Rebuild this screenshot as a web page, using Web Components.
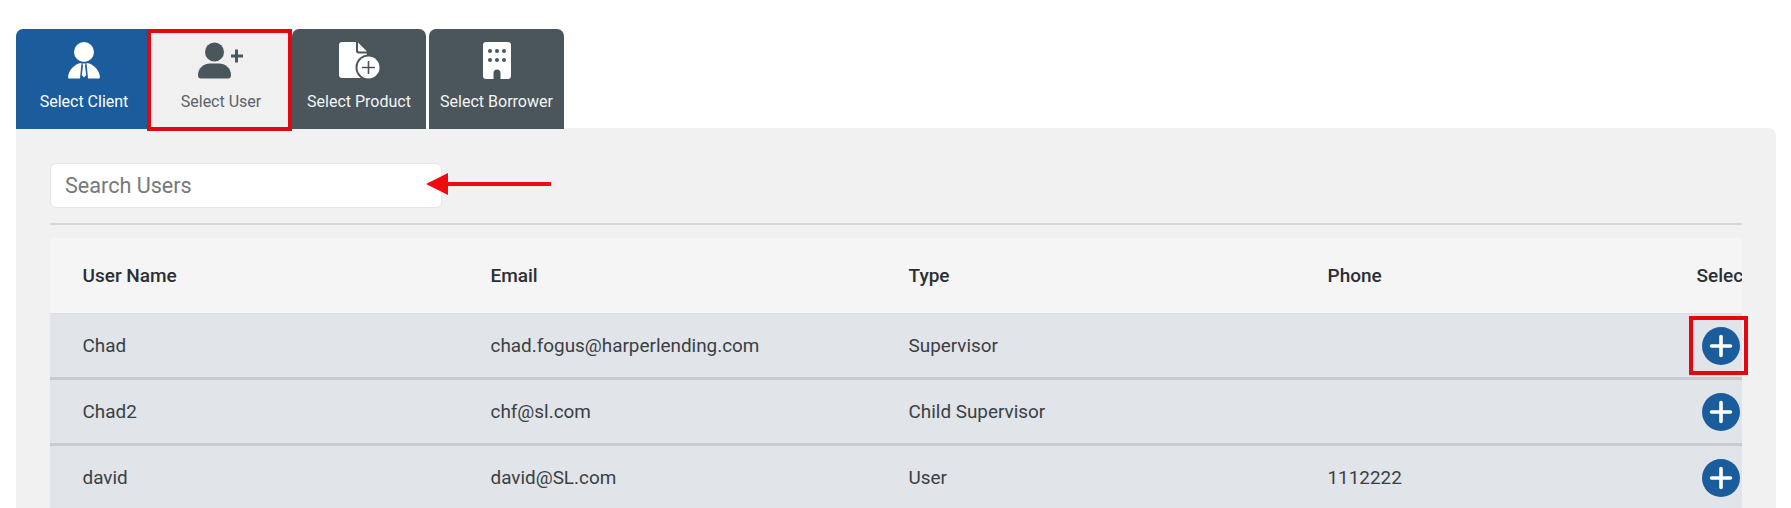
<!DOCTYPE html>
<html>
<head>
<meta charset="utf-8">
<style>
  html, body { margin: 0; height: 508px; overflow: hidden; background: #fff; }
  body { font-family: Roboto, "Liberation Sans", sans-serif; }
</style>
</head>
<body>
<select-page>
  <tab-bar>
    <tab-item active-blue width="131">
      <svg slot="icon" width="32" height="37" viewBox="0 0 32 37" fill="#fff">
        <circle cx="16" cy="10" r="10"/>
        <path d="M10.500 21.500 L13.500 21 L12 36.500 L1 36.500 C0 36.500 0 35 .3 33.500 C1.200 28 5 24 10.500 21.500Z"/>
        <path d="M21.500 21.500 L18.500 21 L20 36.500 L31 36.500 C32 36.500 32 35 31.700 33.500 C30.800 28 27 24 21.500 21.500Z"/>
        <path d="M14.400 21.500 H17.600 L17 24 L18.200 33 L16 35.500 L13.800 33 L15 24Z"/>
      </svg>
      Select Client
    </tab-item>
    <tab-item current width="145">
      <svg slot="icon" width="46" height="37" viewBox="0 0 46 37" fill="#4b555c">
        <circle cx="16.500" cy="10" r="9.500"/>
        <path d="M0 33 C0 26 6 21.500 12 21.500 H21 C27 21.500 33 26 33 33 C33 35.500 32 36.500 30 36.500 H3 C1 36.500 0 35.500 0 33Z"/>
        <path d="M33 12.500 H37 V7.500 H40 V12.500 H45 V15.500 H40 V20.500 H37 V15.500 H33Z"/>
      </svg>
      Select User
    </tab-item>
    <tab-item width="134">
      <svg slot="icon" width="41" height="37" viewBox="0 0 41 37">
        <path fill="#fff" d="M3 0 H17 V9 C17 10.500 18 11.500 19.500 11.500 H28 V36 H3 C1.300 36 0 34.700 0 33 V3 C0 1.300 1.300 0 3 0Z"/>
        <path fill="#fff" d="M19 0.500 L28 9.500 H20.500 C19.500 9.500 19 9 19 8Z"/>
        <circle cx="29.500" cy="25.500" r="13" fill="#4b555c"/>
        <circle cx="29.500" cy="25.500" r="11" fill="#fff"/>
        <path fill="#4b555c" d="M28.700 19 H30.300 V24.700 H36 V26.300 H30.300 V32 H28.700 V26.300 H23 V24.700 H28.700Z"/>
      </svg>
      Select Product
    </tab-item>
    <tab-item width="135" class="last">
      <svg slot="icon" width="28" height="37" viewBox="0 0 28 37">
        <path fill="#fff" d="M3 0 H25 C26.700 0 28 1.300 28 3 V34 C28 35.700 26.700 37 25 37 H17.500 V31 C17.500 29 16 27.500 14 27.500 C12 27.500 10.500 29 10.500 31 V37 H3 C1.300 37 0 35.700 0 34 V3 C0 1.300 1.300 0 3 0Z"/>
        <g fill="#4b555c">
          <circle cx="7" cy="9" r="2"/><circle cx="14" cy="9" r="2"/><circle cx="21" cy="9" r="2"/>
          <circle cx="7" cy="18" r="2"/><circle cx="14" cy="18" r="2"/><circle cx="21" cy="18" r="2"/>
        </g>
      </svg>
      Select Borrower
    </tab-item>
  </tab-bar>
  <content-panel>
    <search-box placeholder="Search Users"></search-box>
    <user-table>
      <user-row header>
        <span slot="name">User Name</span><span slot="email">Email</span><span slot="type">Type</span><span slot="phone">Phone</span><span slot="select">Select</span>
      </user-row>
      <user-row>
        <span slot="name">Chad</span><span slot="email">chad.fogus@harperlending.com</span><span slot="type">Supervisor</span><add-button slot="select"></add-button>
      </user-row>
      <user-row>
        <span slot="name">Chad2</span><span slot="email">chf@sl.com</span><span slot="type">Child Supervisor</span><add-button slot="select"></add-button>
      </user-row>
      <user-row>
        <span slot="name">david</span><span slot="email">david@SL.com</span><span slot="type">User</span><span slot="phone">1112222</span><add-button slot="select"></add-button>
      </user-row>
    </user-table>
  </content-panel>
  <call-outs></call-outs>
</select-page>

<script>
class SelectPage extends HTMLElement {
  constructor() {
    super();
    this.attachShadow({ mode: "open" });
    this.shadowRoot.innerHTML = `
      <style>
        :host {
          display: block;
          position: relative;
          height: 508px;
          padding: 29px 15px 0 16px;
          box-sizing: border-box;
          overflow: hidden;
        }
      </style>
      <slot></slot>
    `;
  }
}

class TabBar extends HTMLElement {
  constructor() {
    super();
    this.attachShadow({ mode: "open" });
    this.shadowRoot.innerHTML = `
      <style>
        :host {
          display: flex;
          position: relative;
          z-index: 1;
          height: 100px;
          margin-bottom: -1px;
        }
      </style>
      <slot></slot>
    `;
  }
}

class TabItem extends HTMLElement {
  constructor() {
    super();
    this.attachShadow({ mode: "open" });
    this.shadowRoot.innerHTML = `
      <style>
        :host {
          display: flex;
          flex-direction: column;
          align-items: center;
          box-sizing: border-box;
          height: 100px;
          background: #4b555c;
          color: #f4f5f5;
          font-size: 16px;
          white-space: nowrap;
          border-radius: 7px 7px 0 0;
        }
        :host([active-blue]) { background: #1b5c9c; color: #fff; border-radius: 7px 0 0 0; padding-left: 5px; }
        :host([current]) { background: #f0f0f0; color: #5b6268; border-radius: 0; padding-left: 3px; }
        :host(.last) { margin-left: 3px; }
        .icon {
          display: flex;
          align-items: flex-end;
          justify-content: center;
          height: 50px;
          margin-bottom: 13px;
        }
        ::slotted(svg) { display: block; }
      </style>
      <div class="icon"><slot name="icon"></slot></div>
      <slot></slot>
    `;
  }
  connectedCallback() {
    this.style.width = this.getAttribute("width") + "px";
  }
}

class ContentPanel extends HTMLElement {
  constructor() {
    super();
    this.attachShadow({ mode: "open" });
    this.shadowRoot.innerHTML = `
      <style>
        :host {
          display: block;
          height: 400px;
          box-sizing: border-box;
          padding: 35px 34px 0;
          background: #f1f1f1;
          border-radius: 0 8px 0 0;
        }
      </style>
      <slot></slot>
    `;
  }
}

class SearchBox extends HTMLElement {
  constructor() {
    super();
    this.attachShadow({ mode: "open" });
    this.shadowRoot.innerHTML = `
      <style>
        :host {
          display: block;
          padding-bottom: 15px;
          border-bottom: 2px solid #d4d5d6;
          margin-bottom: 13px;
        }
        input {
          display: block;
          box-sizing: border-box;
          width: 392px;
          height: 45px;
          padding: 0 14px;
          border: 1px solid #e5e6e8;
          border-radius: 6px;
          background: #fff;
          font: 21.600px Roboto, "Liberation Sans", sans-serif;
          outline: none;
        }
        input::placeholder { color: #75797d; opacity: 1; }
      </style>
      <input type="text">
    `;
  }
  connectedCallback() {
    this.shadowRoot.querySelector("input").placeholder = this.getAttribute("placeholder") || "";
  }
}

class UserTable extends HTMLElement {
  constructor() {
    super();
    this.attachShadow({ mode: "open" });
    this.shadowRoot.innerHTML = `
      <style>
        :host { display: block; overflow: hidden; }
      </style>
      <slot></slot>
    `;
  }
}

class UserRow extends HTMLElement {
  constructor() {
    super();
    this.attachShadow({ mode: "open" });
    this.shadowRoot.innerHTML = `
      <style>
        :host {
          display: grid;
          grid-template-columns: 408px 418px 419px 369px 100px;
          align-items: center;
          width: 1714px;
          height: 66px;
          box-sizing: border-box;
          background: #e1e4e9;
          border-bottom: 3px solid #c8ccd1;
          color: #3a3f44;
          font-size: 18.900px;
          white-space: nowrap;
        }
        :host([header]) {
          height: 76px;
          background: #f5f5f5;
          border-bottom: 1px solid #dcdee1;
          color: #2b2f33;
          font-weight: 500;
          font-size: 19px;
        }
        div { padding-left: 32.500px; }
        ::slotted(add-button) { margin-left: 5.500px; }
      </style>
      <div><slot name="name"></slot></div>
      <div><slot name="email"></slot></div>
      <div><slot name="type"></slot></div>
      <div><slot name="phone"></slot></div>
      <div><slot name="select"></slot></div>
    `;
  }
}

class AddButton extends HTMLElement {
  constructor() {
    super();
    this.attachShadow({ mode: "open" });
    this.shadowRoot.innerHTML = `
      <style>
        :host { display: block; width: 38px; height: 38px; }
        svg { display: block; }
      </style>
      <svg width="38" height="38" viewBox="0 0 38 38">
        <circle cx="19" cy="19" r="19" fill="#1b5c9c"/>
        <path d="M19 9.500 V28.500 M9.500 19 H28.500" stroke="#fff" stroke-width="3.600" stroke-linecap="round"/>
      </svg>
    `;
  }
}

// red annotation marks lying over the screenshot
class CallOuts extends HTMLElement {
  constructor() {
    super();
    this.attachShadow({ mode: "open" });
    this.shadowRoot.innerHTML = `
      <style>
        :host { position: absolute; inset: 0; z-index: 2; pointer-events: none; }
        .box { position: absolute; box-sizing: border-box; border: 4px solid #e2080f; }
        .tab { left: 147px; top: 29px; width: 145px; height: 102px; }
        .add { left: 1689px; top: 316px; width: 59px; height: 59px; }
        svg { position: absolute; left: 424px; top: 172px; }
      </style>
      <div class="box tab"></div>
      <div class="box add"></div>
      <svg width="130" height="24" viewBox="0 0 130 24">
        <path d="M2 12 L24 1 V10 H127 V14 H24 V23Z" fill="#ee0a10"/>
      </svg>
    `;
  }
}

customElements.define("select-page", SelectPage);
customElements.define("tab-bar", TabBar);
customElements.define("tab-item", TabItem);
customElements.define("content-panel", ContentPanel);
customElements.define("search-box", SearchBox);
customElements.define("user-table", UserTable);
customElements.define("user-row", UserRow);
customElements.define("add-button", AddButton);
customElements.define("call-outs", CallOuts);
</script>
</body>
</html>
